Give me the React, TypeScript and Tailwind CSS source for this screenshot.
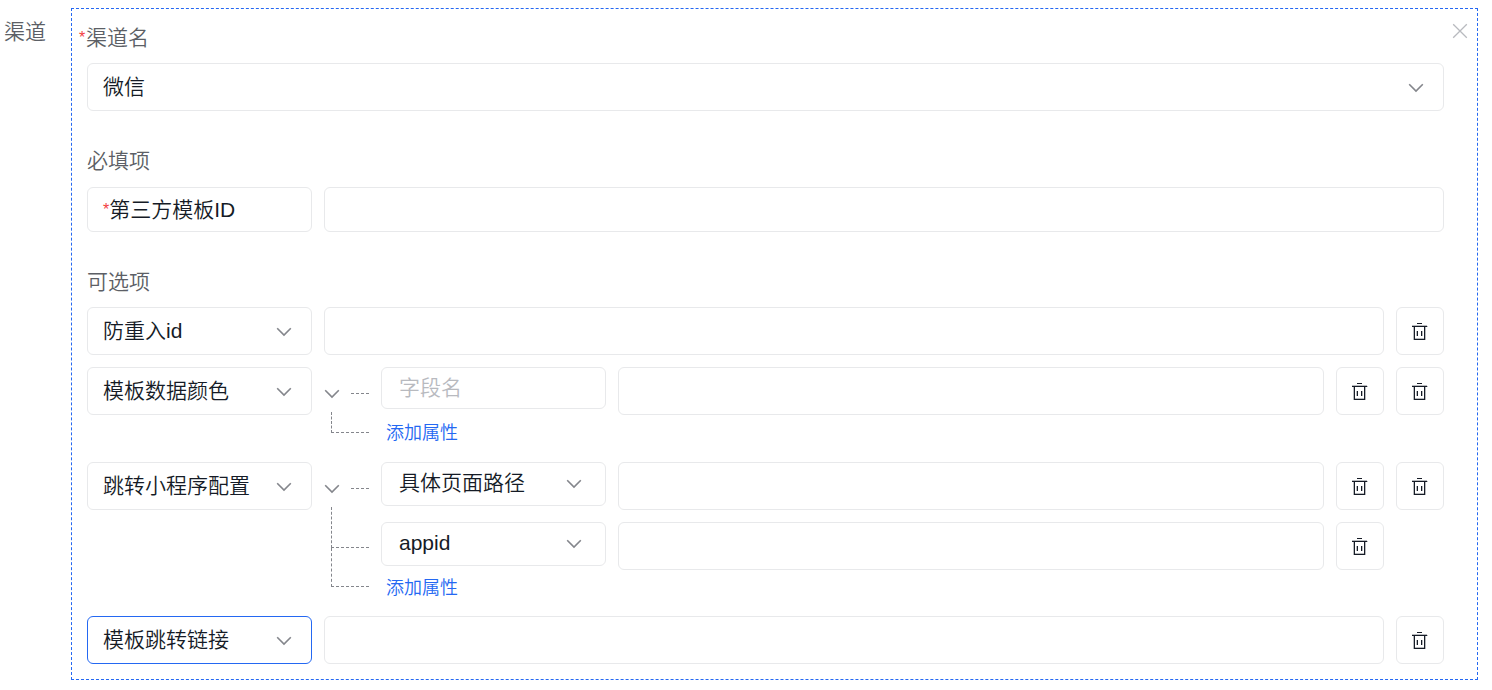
import { useState } from "react";
import type { ReactNode } from "react";
import clsx from "clsx";

const BORDER = "rounded-md border border-[#e8e9eb] bg-white";

const ChevronIcon = ({ className }: { className?: string }) => (
  <svg
    viewBox="0 0 16 10"
    fill="none"
    stroke="#84868c"
    strokeWidth="1.6"
    className={clsx("h-[10px] w-4", className)}
    aria-hidden="true"
  >
    <path d="M1.2 1.2 8 8l6.8-6.8" />
  </svg>
);

const TrashIcon = () => (
  <svg viewBox="0 0 16 18" className="h-[18px] w-4" aria-hidden="true">
    <path fill="#151b26" d="M5 1h5v1H5zM5 9h1v5H5zM9 9h1v5H9z" />
    <path fill="#151b26" d="M0 4h15v1H0zM2 5h1v12h9V5h1v13H2z" />
    <path
      fill="#151b26"
      opacity=".3"
      d="M0 3h15v1H0zM-1 4h1v1h-1zM15 4h1v1h-1zM1 5h1v13H1zM13 5h1v13h-1zM4 9h1v5H4zM10 9h1v5h-1zM3 16h9v1H3z"
    />
  </svg>
);

type SelectProps = {
  label: string;
  options: string[];
  size?: "default" | "small";
  active?: boolean;
  className?: string;
  id?: string;
};

const Select = ({
  label,
  options,
  size = "default",
  active,
  className = "w-[225px]",
  id,
}: SelectProps) => (
  <div className={clsx("relative shrink-0", className)}>
    <select
      id={id}
      aria-label={label}
      className={clsx(
        "block w-full appearance-none rounded-md border bg-white pr-10 text-[21px] outline-none",
        size === "small" ? "h-11 pb-[2px] pl-[17px]" : "h-12 pl-[15px]",
        active ? "border-[#2468f2]" : "border-[#e8e9eb]",
      )}
    >
      {options.map((option) => (
        <option key={option}>{option}</option>
      ))}
    </select>
    <ChevronIcon
      className={clsx(
        "pointer-events-none absolute",
        size === "small" ? "top-[17px] right-6" : "top-5 right-5",
      )}
    />
  </div>
);

const ValueInput = ({ label }: { label: string }) => (
  <input
    type="text"
    aria-label={label}
    className={clsx(BORDER, "h-12 min-w-0 flex-1 px-[15px] text-[21px] outline-none")}
  />
);

const DeleteButton = ({ label }: { label: string }) => (
  <button
    type="button"
    aria-label={`删除${label}`}
    className={clsx(BORDER, "flex size-12 shrink-0 items-center justify-center")}
  >
    <TrashIcon />
  </button>
);

const AddLink = () => (
  <div className="flex h-[34px] items-center pt-[2px] pl-[5px]">
    <a href="#add" className="text-lg leading-7 text-[#2468f2]">
      添加属性
    </a>
  </div>
);

const Branch = ({ className }: { className: string }) => (
  <div
    className={clsx(
      "ml-[7px] border-b border-l border-dashed border-[#84868c]",
      className,
    )}
  />
);

/** An option whose value is a list of nested attributes, drawn as a small tree. */
const OptionGroup = ({
  name,
  branches,
  children,
}: {
  name: string;
  branches: ReactNode;
  children: ReactNode;
}) => {
  const [open, setOpen] = useState(true);

  return (
    <div className="flex min-h-[83px] items-start gap-3">
      <Select label="可选项" options={[name]} />
      <div className="w-[45px] shrink-0">
        <div className="flex h-[45px] items-center justify-between pt-2">
          <button
            type="button"
            aria-label={`展开${name}`}
            aria-expanded={open}
            onClick={() => setOpen(!open)}
          >
            <ChevronIcon />
          </button>
          <span className="w-[18px] border-t border-dashed border-[#84868c]" />
        </div>
        {open && branches}
      </div>
      <div className="min-w-0 flex-1">{open && children}</div>
      <DeleteButton label={name} />
    </div>
  );
};

const SimpleOption = ({ name, active }: { name: string; active?: boolean }) => (
  <div className="flex gap-3">
    <Select label="可选项" options={[name]} active={active} />
    <ValueInput label={name} />
    <DeleteButton label={name} />
  </div>
);

const Star = ({ className }: { className?: string }) => (
  <span className={clsx("text-base leading-5 text-[#f33e3e]", className)}>*</span>
);

export default function App() {
  return (
    <div className="flex items-start bg-white pt-2 pr-[14px] pb-[10px] pl-1 font-['Liberation_Sans','Noto_Sans_CJK_SC',sans-serif] font-[350] text-[#151b26]">
      <div className="w-[67px] shrink-0 pt-[10px] text-[21px] leading-7 text-[#5c5f66]">
        渠道
      </div>

      <section className="relative min-w-0 flex-1 border border-dashed border-[#2468f2] pt-[15px] pr-[33px] pb-[15px] pl-[15px]">
        <button type="button" aria-label="关闭" className="absolute top-[14px] right-[9px]">
          <svg
            viewBox="0 0 16 16"
            className="size-4"
            fill="none"
            stroke="#b8babf"
            strokeWidth="1.3"
          >
            <path d="m1.2 1.2 13.6 13.6M14.8 1.2 1.2 14.8" />
          </svg>
        </button>

        <label
          htmlFor="channel"
          className="-ml-2 mb-[11px] flex h-7 w-fit items-center text-[21px] leading-7 text-[#5c5f66]"
        >
          <Star className="w-[7px]" />
          渠道名
        </label>
        <Select id="channel" label="渠道名" options={["微信"]} className="w-full" />

        <h3 className="mt-9 mb-3 text-[21px] leading-7 text-[#5c5f66]">必填项</h3>
        <div className="flex gap-3">
          <label
            htmlFor="template-id"
            className={clsx(
              BORDER,
              "flex h-[45px] w-[225px] shrink-0 items-center pl-[15px] text-[21px]",
            )}
          >
            <Star />
            第三方模板ID
          </label>
          <input
            id="template-id"
            type="text"
            className={clsx(
              BORDER,
              "h-[45px] min-w-0 flex-1 px-[15px] text-[21px] outline-none",
            )}
          />
        </div>

        <h3 className="mt-9 mb-[11px] text-[21px] leading-7 text-[#5c5f66]">可选项</h3>
        <div className="flex flex-col gap-3">
          <SimpleOption name="防重入id" />

          <OptionGroup name="模板数据颜色" branches={<Branch className="h-[21px]" />}>
            <div className="flex items-start gap-3">
              <input
                type="text"
                aria-label="字段名"
                placeholder="字段名"
                className={clsx(
                  BORDER,
                  "h-[42px] w-[225px] shrink-0 px-[17px] text-[21px] outline-none placeholder:text-[#b8babf]",
                )}
              />
              <ValueInput label="字段值" />
              <DeleteButton label="字段" />
            </div>
            <AddLink />
          </OptionGroup>

          <OptionGroup
            name="跳转小程序配置"
            branches={
              <>
                <Branch className="h-[41px]" />
                <Branch className="h-[39px]" />
              </>
            }
          >
            <div className="flex flex-col gap-3">
              {["具体页面路径", "appid"].map((field) => (
                <div key={field} className="flex items-start gap-3">
                  <Select label="属性" options={[field]} size="small" />
                  <ValueInput label={field} />
                  <DeleteButton label={field} />
                </div>
              ))}
            </div>
            <AddLink />
          </OptionGroup>

          <SimpleOption name="模板跳转链接" active />
        </div>
      </section>
    </div>
  );
}
